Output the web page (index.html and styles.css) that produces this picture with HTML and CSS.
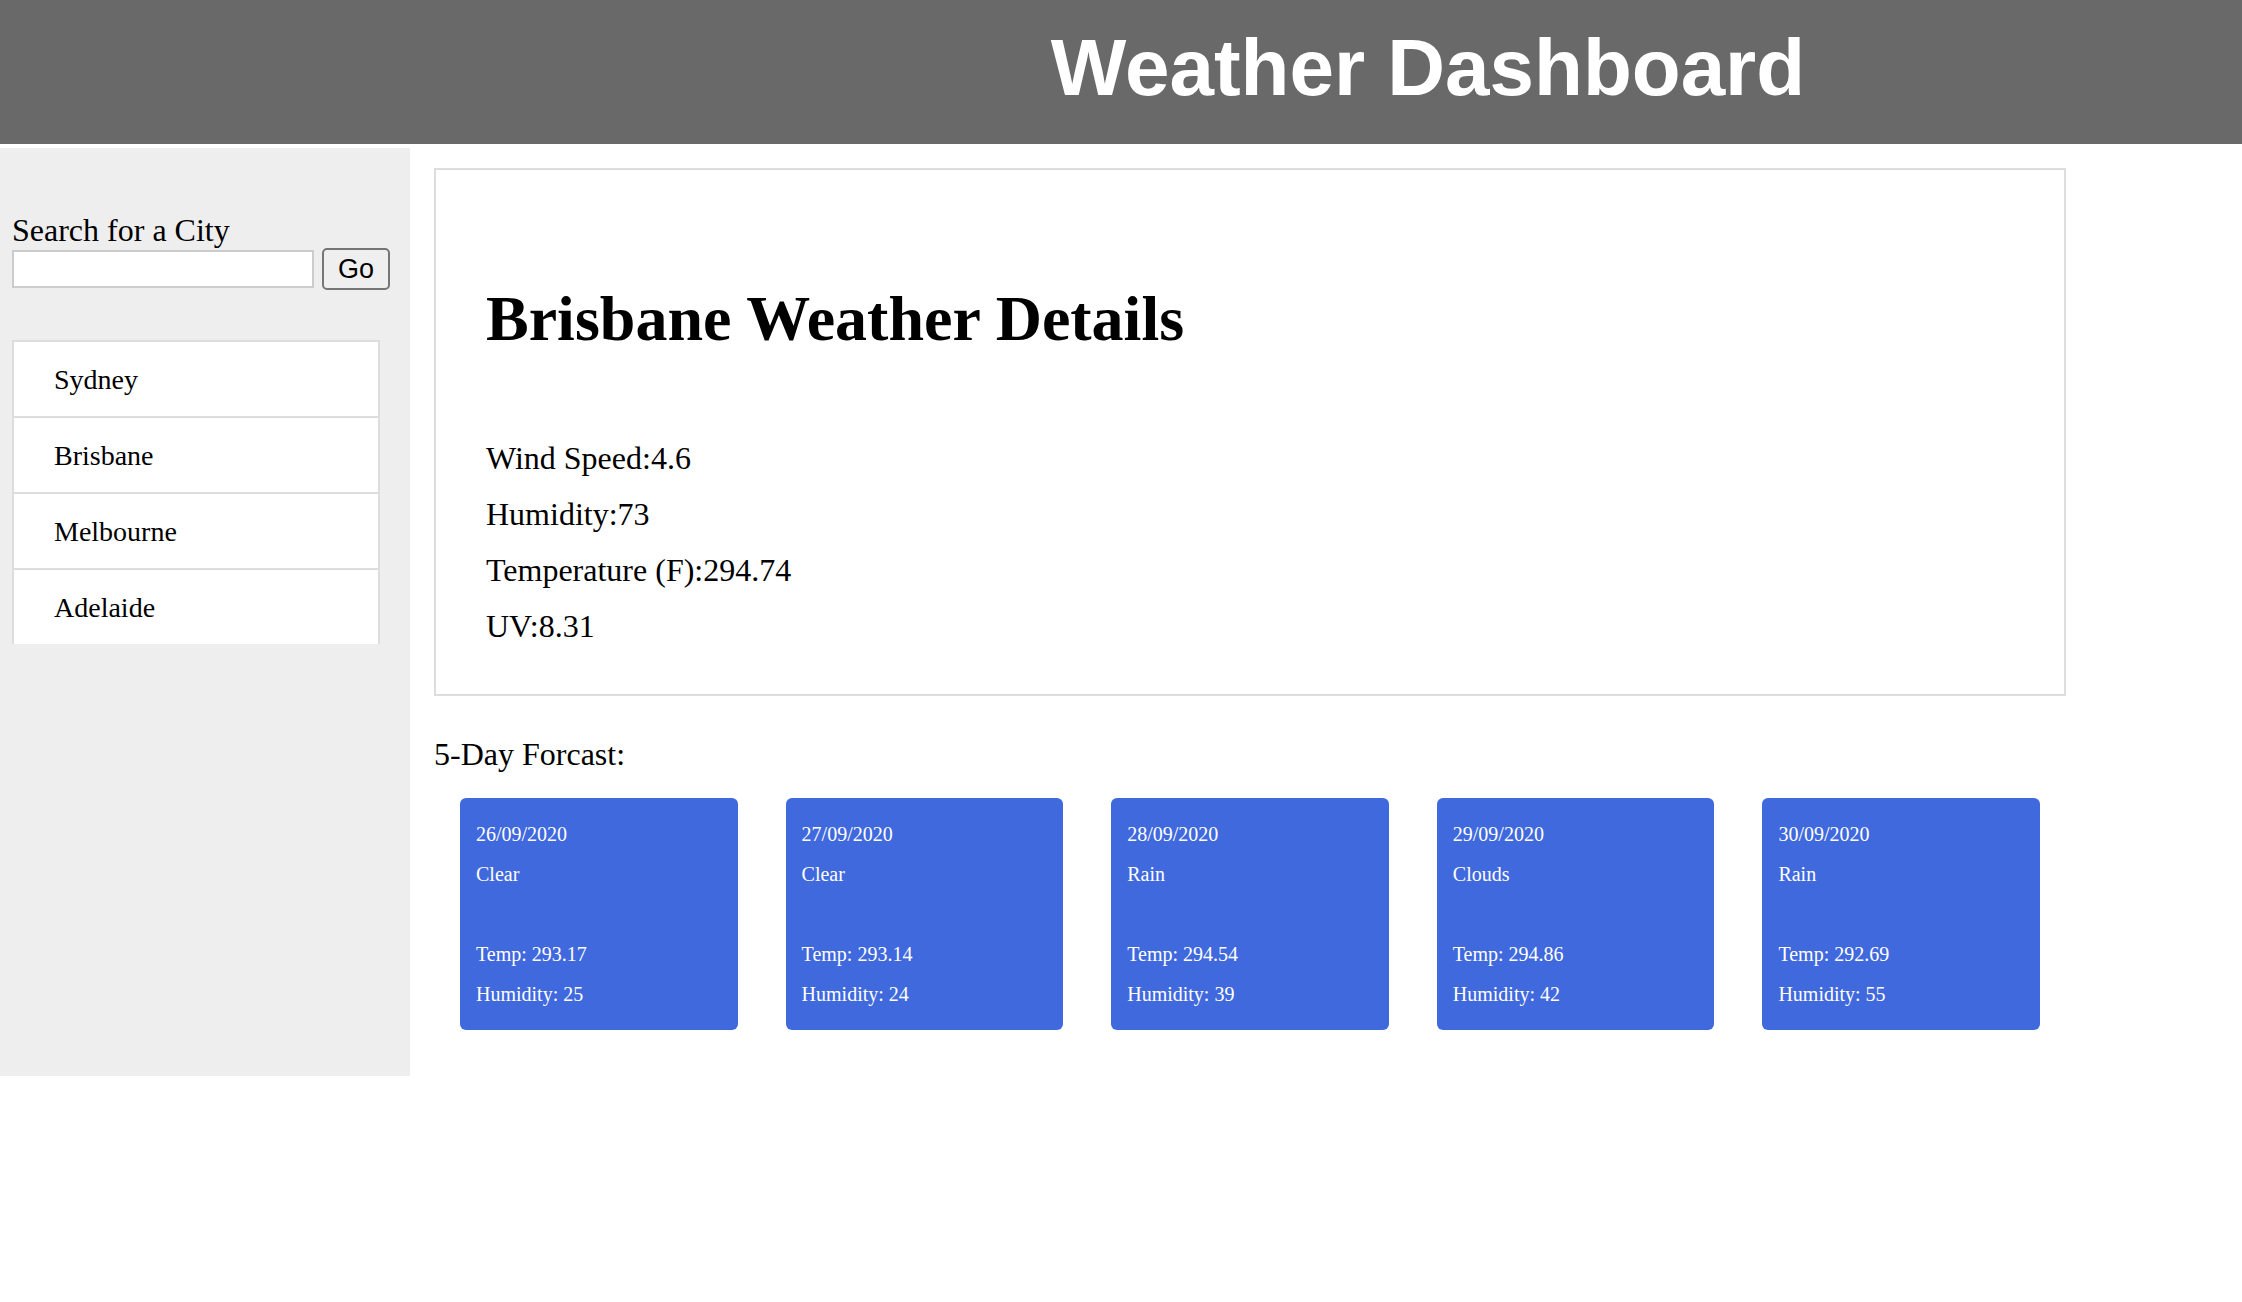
FILE: index.html
```html
<!DOCTYPE html>
<html lang="en">
<head>
<meta charset="utf-8">
<title>Weather Dashboard</title>
<link rel="stylesheet" href="styles.css">
</head>
<body>
<header class="header"><h1 class="header-title">Weather Dashboard</h1></header>
<div class="layout">
  <aside class="sidebar">
    <form class="search">
      <label class="search-label" for="city">Search for a City</label>
      <div class="search-row">
        <input class="search-input" id="city" type="text">
        <button class="search-button" type="button">Go</button>
      </div>
    </form>
    <ul class="cities">
      <li class="city">Sydney</li>
      <li class="city">Brisbane</li>
      <li class="city">Melbourne</li>
      <li class="city">Adelaide</li>
    </ul>
  </aside>
  <main class="main">
    <section class="details">
      <h2 class="details-title">Brisbane Weather Details</h2>
      <p class="details-line">Wind Speed:4.6</p>
      <p class="details-line">Humidity:73</p>
      <p class="details-line">Temperature (F):294.74</p>
      <p class="details-line">UV:8.31</p>
    </section>
    <h3 class="forecast-title">5-Day Forcast:</h3>
    <section class="forecast">
      <article class="card"><p>26/09/2020</p><p>Clear</p><p class="card-temp">Temp: 293.17</p><p>Humidity: 25</p></article>
      <article class="card"><p>27/09/2020</p><p>Clear</p><p class="card-temp">Temp: 293.14</p><p>Humidity: 24</p></article>
      <article class="card"><p>28/09/2020</p><p>Rain</p><p class="card-temp">Temp: 294.54</p><p>Humidity: 39</p></article>
      <article class="card"><p>29/09/2020</p><p>Clouds</p><p class="card-temp">Temp: 294.86</p><p>Humidity: 42</p></article>
      <article class="card"><p>30/09/2020</p><p>Rain</p><p class="card-temp">Temp: 292.69</p><p>Humidity: 55</p></article>
    </section>
  </main>
</div>
</body>
</html>
```
FILE: styles.css
```css
* {
  box-sizing: border-box;
}

body {
  margin: 0;
  background: #fff;
  color: #000;
  font-family: "Liberation Serif", "Times New Roman", serif;
  font-size: 32px;
  line-height: 36px;
}

h1, h2, h3, p, ul {
  margin: 0;
  padding: 0;
}

.header {
  padding: 22px 0 30px 614px;
  background: #696969;
  color: #fff;
  text-align: center;
}

.header-title {
  font-family: "Liberation Sans", Arial, sans-serif;
  font-size: 80px;
  line-height: 92px;
}

.layout {
  display: flex;
  gap: 24px;
  margin-top: 4px;
}

.sidebar {
  flex: 0 0 410px;
  min-width: 0;
  padding: 64px 20px 0 12px;
  background: #eee;
}

.search-label {
  display: block;
}

.search-row {
  display: flex;
  align-items: center;
  gap: 8px;
}

.search-input {
  flex: 1;
  min-width: 0;
  height: 38px;
  padding: 0 8px;
  border: 2px solid #ccc;
  background: #fff;
  font: inherit;
}

.search-button {
  width: 68px;
  height: 42px;
  padding: 0;
  border: 2px solid #767676;
  border-radius: 5px;
  background: #efefef;
  color: #000;
  font-family: "Liberation Sans", Arial, sans-serif;
  font-size: 27px;
}

.cities {
  margin: 50px 10px 0 0;
  border: 2px solid #ddd;
  border-width: 0 2px;
  background: #fff;
  font-size: 28px;
  list-style: none;
}

.city {
  padding: 20px 40px 18px;
  border-top: 2px solid #ddd;
}

.main {
  flex: 1;
  margin-right: 176px;
  padding: 20px 0 46px;
}

.details {
  padding: 113px 50px 40px;
  border: 2px solid #ddd;
}

.details-title {
  margin-bottom: 75px;
  font-size: 64px;
  line-height: 72px;
}

.details-line {
  line-height: 56px;
}

.forecast-title {
  margin: 40px 0 26px;
  font-size: 32px;
  font-weight: normal;
}

.forecast {
  display: grid;
  grid-template-columns: repeat(5, 1fr);
  gap: 48px;
  padding: 0 26px;
}

.card {
  padding: 16px;
  border-radius: 6px;
  background: #4069dd;
  color: #fff;
  font-size: 20px;
  line-height: 40px;
}

.card-temp {
  margin-top: 40px;
}
```
